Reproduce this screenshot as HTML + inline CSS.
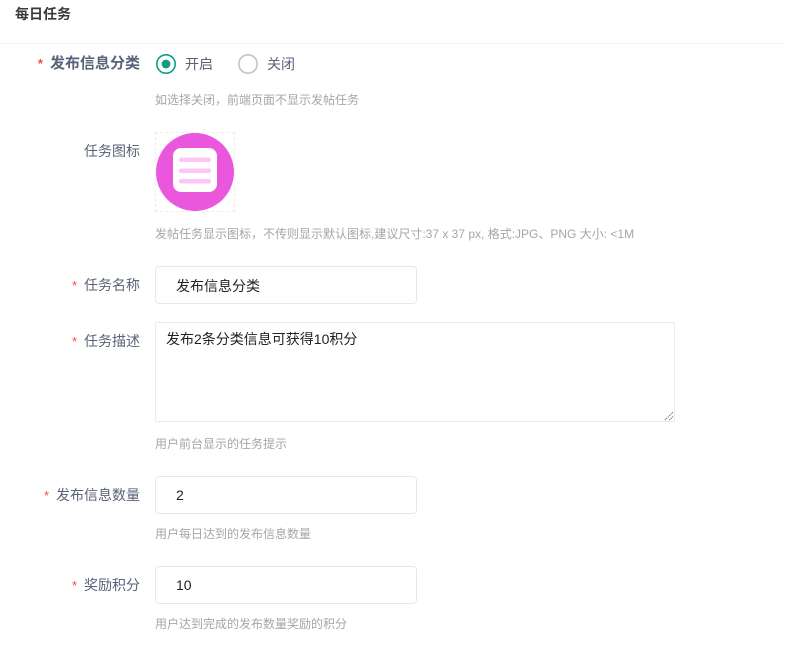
<!DOCTYPE html>
<html><head><meta charset="utf-8">
<style>
html,body{margin:0;padding:0;background:#fff;width:785px;height:651px;overflow:hidden}
body{position:relative;font-family:"Liberation Sans","Noto Sans CJK SC",sans-serif}
.a{position:absolute;white-space:nowrap}
.l{right:645px;font-size:14px;line-height:20px;color:#5a6278;text-align:right}
.l i{font-style:normal;color:#f5484a;font-size:13px;margin-right:7px;font-family:"Liberation Sans",sans-serif}
.h{left:155px;font-size:12px;line-height:16px;color:#a6a6a6}
.b{left:155px;width:260px;height:36px;border:1px solid #e8e8e8;border-radius:4px;background:#fff}
.v{left:176px;font-size:14px;line-height:20px;color:#222}
</style></head><body>
<div class="a" style="left:15px;top:4px;font-size:14px;line-height:20px;font-weight:bold;color:#3a3a3a">每日任务</div>
<div class="a" style="left:0;top:43px;width:785px;height:1px;background:#f4f4f4"></div>

<div class="a l" style="top:54px;font-weight:bold;font-size:15px"><i>*</i>发布信息分类</div>
<svg class="a" style="left:155px;top:53px" width="22" height="22" viewBox="0 0 22 22">
<circle cx="11" cy="11" r="9.200" fill="none" stroke="#0f9c88" stroke-width="1.600"/>
<circle cx="11" cy="11" r="4.400" fill="#0f9c88"/>
</svg>
<div class="a" style="left:185px;top:54px;font-size:14px;line-height:20px;color:#5a6278">开启</div>
<svg class="a" style="left:237px;top:53px" width="22" height="22" viewBox="0 0 22 22">
<circle cx="11" cy="11" r="9.200" fill="none" stroke="#c8c8c8" stroke-width="1.800"/>
</svg>
<div class="a" style="left:267px;top:54px;font-size:14px;line-height:20px;color:#5a6278">关闭</div>
<div class="a h" style="top:92px">如选择关闭，前端页面不显示发帖任务</div>

<div class="a l" style="top:141px">任务图标</div>
<div class="a" style="left:155px;top:132px;width:78px;height:78px;border:1px dashed #eeeeee"></div>
<svg class="a" style="left:155px;top:132px" width="80" height="80" viewBox="0 0 80 80">
<circle cx="40" cy="40" r="39" fill="#ea57dd"/>
<rect x="18" y="16" width="44" height="44" rx="8" fill="#fff"/>
<rect x="24" y="25.500" width="32" height="4.500" rx="2.200" fill="#fdc6f6"/>
<rect x="24" y="36.500" width="32" height="4.500" rx="2.200" fill="#fdc6f6"/>
<rect x="24" y="47" width="32" height="4.500" rx="2.200" fill="#fdc6f6"/>
</svg>
<div class="a h" style="top:226px">发帖任务显示图标，不传则显示默认图标,建议尺寸:37 x 37 px, 格式:JPG、PNG 大小: &lt;1M</div>

<div class="a l" style="top:275px"><i>*</i>任务名称</div>
<div class="a b" style="top:266px"></div>
<div class="a v" style="top:276px">发布信息分类</div>

<div class="a l" style="top:331px"><i>*</i>任务描述</div>
<div class="a" style="left:155px;top:322px;width:518px;height:98px;border:1px solid #ebebeb;background:#fff"></div>
<div class="a" style="left:166px;top:329px;font-size:14px;line-height:20px;color:#222">发布2条分类信息可获得10积分</div>
<svg class="a" style="left:664px;top:411px" width="10" height="10" viewBox="0 0 10 10"><path d="M1 9L9 1M5.500 9L9 5.500" stroke="#555" stroke-width="1" stroke-dasharray="1 1" fill="none"/></svg>
<div class="a h" style="top:436px">用户前台显示的任务提示</div>

<div class="a l" style="top:485px"><i>*</i>发布信息数量</div>
<div class="a b" style="top:476px"></div>
<div class="a v" style="top:485px">2</div>
<div class="a h" style="top:526px">用户每日达到的发布信息数量</div>

<div class="a l" style="top:575px"><i>*</i>奖励积分</div>
<div class="a b" style="top:566px"></div>
<div class="a v" style="top:575px">10</div>
<div class="a h" style="top:616px">用户达到完成的发布数量奖励的积分</div>
</body></html>
